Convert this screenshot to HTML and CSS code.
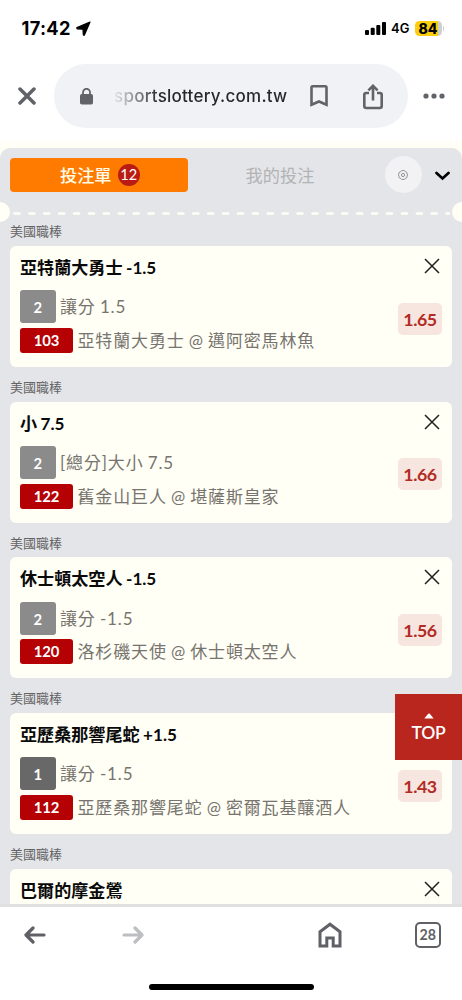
FILE: index.html
```html
<!DOCTYPE html>
<html lang="zh-Hant">
<head>
<meta charset="utf-8">
<title>投注單</title>
<link rel="stylesheet" href="styles.css">
</head>
<body>
<div class="phone">
  <div class="status">
    <span class="time">17:42</span>
    <svg class="loc" width="15" height="15" viewBox="0 0 15 15"><path d="M14 1 1 6.6Q.4 7.2 1.2 7.8L7 8.2 7.3 13.8Q7.8 14.8 8.5 13.8Z" fill="#000" stroke="#000" stroke-width="1.2" stroke-linejoin="round"/></svg>
    <svg class="signal" width="21" height="13" viewBox="0 0 21 13"><rect x="0" y="8" width="4" height="5" rx="1"/><rect x="5.7" y="5.7" width="4" height="7.3" rx="1"/><rect x="11.3" y="3" width="4" height="10" rx="1"/><rect x="17" y="0" width="4" height="13" rx="1"/></svg>
    <span class="net">4G</span>
    <span class="battery">84</span><span class="tip"></span>
  </div>
  <div class="toolbar">
    <svg class="close" width="18" height="18" viewBox="0 0 18 18"><path d="M2 2 16 16M16 2 2 16" stroke="#5f6267" stroke-width="3.5" stroke-linecap="round"/></svg>
    <div class="url">
      <svg class="lock" width="13" height="17" viewBox="0 0 13 17"><rect x="0" y="6" width="13" height="10.5" rx="1.8" fill="#606368"/><path d="M3 7V4.3a3.5 3.5 0 0 1 7 0V7" fill="none" stroke="#606368" stroke-width="1.8"/></svg>
      <span class="host">sportslottery.com.tw</span>
      <svg class="mark" width="18" height="22" viewBox="0 0 18 22"><path d="M1.5 2.6Q1.5 1.3 2.8 1.3H15.2Q16.5 1.3 16.5 2.6V19.8L9 16.5 1.5 19.8Z" fill="none" stroke="#606368" stroke-width="2.6"/></svg>
      <svg class="share" width="20" height="26" viewBox="0 0 20 26"><path d="M6 9H3Q1.3 9 1.3 10.7V22Q1.3 24 3.3 24H16.7Q18.7 24 18.7 22V10.7Q18.7 9 17 9H14M10 16.5V2M5.4 6.4 10 1.8 14.6 6.4" fill="none" stroke="#606368" stroke-width="2.6"/></svg>
    </div>
    <svg class="more" width="22" height="6" viewBox="0 0 22 6"><g fill="#606368"><circle cx="3" cy="3" r="2.6"/><circle cx="11" cy="3" r="2.6"/><circle cx="19" cy="3" r="2.6"/></g></svg>
  </div>
  <main class="page">
    <div class="panel">
      <div class="tabs">
        <div class="tab active">投注單<span class="count">12</span></div>
        <div class="tab">我的投注</div>
        <div class="gear"><svg width="10" height="10" viewBox="0 0 10 10"><g fill="none" stroke="#7c7c7e" stroke-width=".8"><path d="M3.5.6H6.5L7.3 1.6 8.7 2.2 9.5 4.9 8.7 7.8 7.3 8.4 6.5 9.4H3.5L2.7 8.4 1.3 7.8.5 4.9 1.3 2.2 2.7 1.6Z"/><circle cx="5" cy="5" r="1.6"/></g></svg></div>
        <svg class="chev" width="15" height="10" viewBox="0 0 15 10"><path d="M1.5 2 7.5 7.4 13.5 2" fill="none" stroke="#000" stroke-width="2.7" stroke-linecap="round"/></svg>
      </div>
      <div class="tear"><i class="notch"></i><svg class="dash" width="438" height="3"><path d="M2.5 1.5H438" stroke="#fffff6" stroke-width="2.6" stroke-linecap="round" stroke-dasharray="5 9.9"/></svg><i class="notch right"></i></div>
      <div class="list">
        <section class="bet"><h2>美國職棒</h2><div class="card">
          <div class="info"><h3>亞特蘭大勇士 -1.5</h3><p class="row"><b class="num">2</b>讓分 1.5</p><p class="row"><b class="code">103</b>亞特蘭大勇士 @ 邁阿密馬林魚</p></div>
          <div class="side"><svg class="x" width="16" height="16" viewBox="0 0 16 16"><path d="M1 1 15 15M15 1 1 15"/></svg><span class="odds">1.65</span></div></div></section>
        <section class="bet"><h2>美國職棒</h2><div class="card">
          <div class="info"><h3>小 7.5</h3><p class="row"><b class="num">2</b>[總分]大小 7.5</p><p class="row"><b class="code">122</b>舊金山巨人 @ 堪薩斯皇家</p></div>
          <div class="side"><svg class="x" width="16" height="16" viewBox="0 0 16 16"><path d="M1 1 15 15M15 1 1 15"/></svg><span class="odds">1.66</span></div></div></section>
        <section class="bet"><h2>美國職棒</h2><div class="card">
          <div class="info"><h3>休士頓太空人 -1.5</h3><p class="row"><b class="num">2</b>讓分 -1.5</p><p class="row"><b class="code">120</b>洛杉磯天使 @ 休士頓太空人</p></div>
          <div class="side"><svg class="x" width="16" height="16" viewBox="0 0 16 16"><path d="M1 1 15 15M15 1 1 15"/></svg><span class="odds">1.56</span></div></div></section>
        <section class="bet"><h2>美國職棒</h2><div class="card">
          <div class="info"><h3>亞歷桑那響尾蛇 +1.5</h3><p class="row"><b class="num dark">1</b>讓分 -1.5</p><p class="row"><b class="code">112</b>亞歷桑那響尾蛇 @ 密爾瓦基釀酒人</p></div>
          <div class="side"><svg class="x" width="16" height="16" viewBox="0 0 16 16"><path d="M1 1 15 15M15 1 1 15"/></svg><span class="odds">1.43</span></div></div></section>
        <section class="bet"><h2>美國職棒</h2><div class="card">
          <div class="info"><h3>巴爾的摩金鶯</h3></div>
          <div class="side"><svg class="x" width="16" height="16" viewBox="0 0 16 16"><path d="M1 1 15 15M15 1 1 15"/></svg></div></div></section>
      </div>
    </div>
  </main>
  <a class="top"><svg width="10" height="6" viewBox="0 0 10 6"><path d="M.3 5.5 4.2.8Q5 0 5.8.8L9.7 5.5Z" fill="#fff"/></svg>TOP</a>
  <nav class="bottom">
    <div class="nav">
      <svg class="back" width="22" height="18" viewBox="0 0 22 18"><path d="M20 9H2.5M9 2 2 9 9 16" fill="none" stroke="#606167" stroke-width="3.2" stroke-linecap="round" stroke-linejoin="round"/></svg>
      <svg class="fwd" width="22" height="18" viewBox="0 0 22 18"><path d="M2 9H19.5M13 2 20 9 13 16" fill="none" stroke="#bdbec2" stroke-width="3.2" stroke-linecap="round" stroke-linejoin="round"/></svg>
      <svg class="home" width="24" height="26" viewBox="0 0 24 26"><path d="M2 24V9.7L12 2.2 22 9.7V24H15.2V16H8.8V24Z" fill="none" stroke="#606167" stroke-width="3"/></svg>
      <span class="count-tabs">28</span>
    </div>
    <div class="indicator"></div>
  </nav>
</div>
</body>
</html>
```
FILE: styles.css
```css
* { box-sizing: border-box; margin: 0; padding: 0; }
body { background: #fff; font-family: Lato, "Noto Sans CJK TC", sans-serif; }
svg { display: block; flex: none; }
.phone { position: relative; width: 462px; height: 1000px; overflow: hidden; display: flex; flex-direction: column; background: #fff; }

.status { height: 56px; flex: none; display: flex; align-items: center; padding: 0 18px 0 21.5px; font-family: Inter, sans-serif; color: #000; }
.time { font-size: 18.2px; font-weight: 700; width: 51px; white-space: nowrap; letter-spacing: .3px; }
.loc { margin-left: 3.5px; }
.signal { margin-left: auto; }
.net { font-size: 13px; font-weight: 600; margin-left: 5px; width: 19px; }
.battery { margin-left: 4.5px; width: 27px; height: 15px; border-radius: 4.5px; background: linear-gradient(90deg, #fccf0c 84%, #cfcfcf 84%); font-size: 14px; line-height: 15px; font-weight: 800; text-align: center; }
.tip { width: 1.5px; height: 5px; margin-left: 1px; background: #ccc; border-radius: 0 2px 2px 0; }

.toolbar { height: 84px; flex: none; display: flex; align-items: flex-start; padding: 8px 17px 0 18px; }
.close { margin-top: 23px; }
.url { width: 354px; height: 64px; margin-left: 18px; border-radius: 32px; background: #f0f2f5; display: flex; align-items: center; padding: 0 25px 0 26px; }
.host { margin-left: 21px; width: 174px; white-space: nowrap; font: 500 17px/24px Inter, sans-serif; letter-spacing: .24px; color: transparent; background: linear-gradient(90deg, #e4e6e9 0, #25272b 45px); -webkit-background-clip: text; background-clip: text; }
.mark { margin-left: 21.5px; }
.share { margin-left: 35.5px; margin-top: 2px; }
.more { margin: 29px 0 0 15px; }

.page { height: 767px; flex: none; overflow: hidden; padding-top: 8px; background: linear-gradient(#fffefb, #fffff5 6px); border-bottom: 3px solid #e0e0e1; }
.panel { background: #e4e5e8; border-radius: 10px 10px 0 0; padding: 7.4px 0 20px; }
.tabs { height: 39px; display: flex; align-items: center; padding: 0 11px 0 10px; }
.tab { width: 178px; height: 34.5px; display: flex; align-items: center; justify-content: center; font-size: 17.2px; color: #b2b3b5; border-radius: 4px; padding-left: 8px; }
.tab.active { background: #ff7b00; color: #fffbe8; font-weight: 500; padding-left: 2px; }
.tab + .tab { padding-left: 6px; }
.count { width: 22.5px; height: 22.5px; margin-left: 6px; border-radius: 50%; background: #b81c14; color: #fff; font-size: 14.5px; font-weight: 400; line-height: 22.5px; text-align: center; }
.gear { width: 37px; height: 37px; margin-left: 18.5px; border-radius: 50%; background: #f2f2f4; display: flex; align-items: center; justify-content: center; }
.chev { margin-left: auto; margin-right: 1px; margin-top: 2px; }
.tear { height: 20px; margin: 8px 0 -3px; display: flex; align-items: center; justify-content: space-between; overflow: hidden; }
.notch { width: 20px; height: 20px; margin-left: -10px; border-radius: 50%; background: #fffff6; flex: none; }
.notch.right { margin: 0 -10px 0 0; }
.dash { margin-top: 2px; }

.list { display: flex; flex-direction: column; gap: 8.05px; padding: 0 10px; }
.bet h2 { font-size: 13px; line-height: 24px; font-weight: 400; color: #646466; margin-bottom: 2.6px; }
.card { height: 121px; border-radius: 6px; background: #fffff5; display: flex; justify-content: space-between; padding: 10px; }
.info { display: flex; flex-direction: column; align-items: flex-start; }
.info h3 { font-size: 17.1px; font-weight: 700; line-height: 24px; color: #0a0a0a; white-space: nowrap; word-spacing: -.7px; }
.row { display: flex; align-items: center; font-size: 17px; letter-spacing: .85px; word-spacing: -1px; color: #77746f; white-space: nowrap; line-height: 24px; }
.num, .code { color: #fff; font-size: 14.8px; font-weight: 700; letter-spacing: 0; text-align: center; border-radius: 3px; margin-right: 4.5px; }
.num { width: 35.5px; height: 33px; line-height: 34px; background: #8b8b8b; }
.num.dark { background: #686868; }
.row:has(.num) { height: 33px; margin-top: 10.3px; line-height: 33px; }
.code { width: 53px; height: 25px; line-height: 25px; background: #b50004; }
.row:has(.code) { margin-top: 4.7px; line-height: 25px; }
.side { display: flex; flex-direction: column; align-items: flex-end; }
.x { margin: 2px 2px 0 0; fill: none; stroke: #20201e; stroke-width: 1.5; }
.odds { width: 44px; height: 32px; margin-top: 28.8px; border-radius: 5px; background: #f7e6df; color: #b22c25; font-size: 17.8px; font-weight: 700; line-height: 32px; letter-spacing: -.45px; text-align: center; }

.top { position: absolute; right: 0; top: 693.5px; width: 67px; height: 66.5px; background: #b8261d; color: #fff; font-size: 17.5px; line-height: 22px; font-weight: 600; display: flex; flex-direction: column; align-items: center; padding-top: 19.5px; gap: 3px; letter-spacing: -.3px; }

.bottom { flex: 1; background: #fff; display: flex; flex-direction: column; align-items: center; }
.nav { width: 100%; height: 56px; display: flex; align-items: center; padding: 0 21.5px 0 23.5px; }
.fwd { margin-left: 76.5px; }
.home { margin-left: auto; }
.count-tabs { margin-left: 73.5px; width: 25.5px; height: 25.5px; border: 2.2px solid #606167; border-radius: 5px; font: 700 14.2px/21.5px Lato, sans-serif; color: #606167; text-align: center; }
.indicator { width: 165px; height: 6px; margin-top: 21px; border-radius: 3px; background: #000; }
```
